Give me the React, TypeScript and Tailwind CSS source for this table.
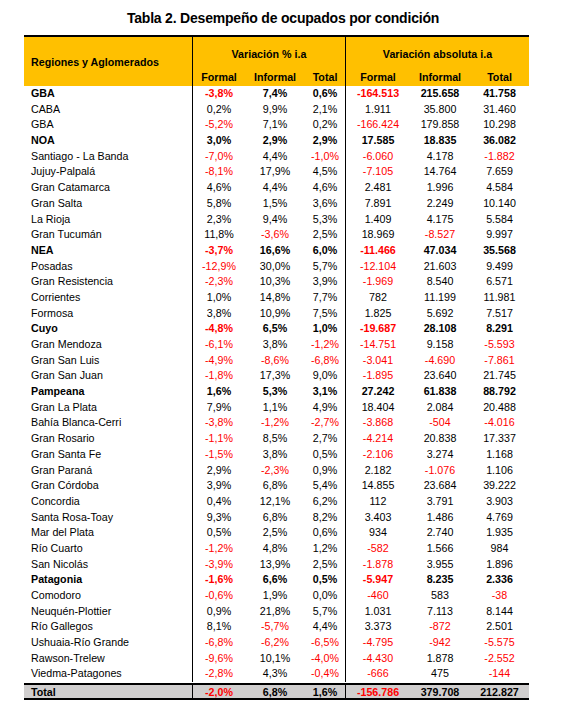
import React from 'react'

type Row = { name: string; bold?: boolean; v: string[] }

const rows: Row[] = [
  { name: 'GBA', bold: true, v: ['-3,8%', '7,4%', '0,6%', '-164.513', '215.658', '41.758'] },
  { name: 'CABA', v: ['0,2%', '9,9%', '2,1%', '1.911', '35.800', '31.460'] },
  { name: 'GBA', v: ['-5,2%', '7,1%', '0,2%', '-166.424', '179.858', '10.298'] },
  { name: 'NOA', bold: true, v: ['3,0%', '2,9%', '2,9%', '17.585', '18.835', '36.082'] },
  { name: 'Santiago - La Banda', v: ['-7,0%', '4,4%', '-1,0%', '-6.060', '4.178', '-1.882'] },
  { name: 'Jujuy-Palpalá', v: ['-8,1%', '17,9%', '4,5%', '-7.105', '14.764', '7.659'] },
  { name: 'Gran Catamarca', v: ['4,6%', '4,4%', '4,6%', '2.481', '1.996', '4.584'] },
  { name: 'Gran Salta', v: ['5,8%', '1,5%', '3,6%', '7.891', '2.249', '10.140'] },
  { name: 'La Rioja', v: ['2,3%', '9,4%', '5,3%', '1.409', '4.175', '5.584'] },
  { name: 'Gran Tucumán', v: ['11,8%', '-3,6%', '2,5%', '18.969', '-8.527', '9.997'] },
  { name: 'NEA', bold: true, v: ['-3,7%', '16,6%', '6,0%', '-11.466', '47.034', '35.568'] },
  { name: 'Posadas', v: ['-12,9%', '30,0%', '5,7%', '-12.104', '21.603', '9.499'] },
  { name: 'Gran Resistencia', v: ['-2,3%', '10,3%', '3,9%', '-1.969', '8.540', '6.571'] },
  { name: 'Corrientes', v: ['1,0%', '14,8%', '7,7%', '782', '11.199', '11.981'] },
  { name: 'Formosa', v: ['3,8%', '10,9%', '7,5%', '1.825', '5.692', '7.517'] },
  { name: 'Cuyo', bold: true, v: ['-4,8%', '6,5%', '1,0%', '-19.687', '28.108', '8.291'] },
  { name: 'Gran Mendoza', v: ['-6,1%', '3,8%', '-1,2%', '-14.751', '9.158', '-5.593'] },
  { name: 'Gran San Luis', v: ['-4,9%', '-8,6%', '-6,8%', '-3.041', '-4.690', '-7.861'] },
  { name: 'Gran San Juan', v: ['-1,8%', '17,3%', '9,0%', '-1.895', '23.640', '21.745'] },
  { name: 'Pampeana', bold: true, v: ['1,6%', '5,3%', '3,1%', '27.242', '61.838', '88.792'] },
  { name: 'Gran La Plata', v: ['7,9%', '1,1%', '4,9%', '18.404', '2.084', '20.488'] },
  { name: 'Bahía Blanca-Cerri', v: ['-3,8%', '-1,2%', '-2,7%', '-3.868', '-504', '-4.016'] },
  { name: 'Gran Rosario', v: ['-1,1%', '8,5%', '2,7%', '-4.214', '20.838', '17.337'] },
  { name: 'Gran Santa Fe', v: ['-1,5%', '3,8%', '0,5%', '-2.106', '3.274', '1.168'] },
  { name: 'Gran Paraná', v: ['2,9%', '-2,3%', '0,9%', '2.182', '-1.076', '1.106'] },
  { name: 'Gran Córdoba', v: ['3,9%', '6,8%', '5,4%', '14.855', '23.684', '39.222'] },
  { name: 'Concordia', v: ['0,4%', '12,1%', '6,2%', '112', '3.791', '3.903'] },
  { name: 'Santa Rosa-Toay', v: ['9,3%', '6,8%', '8,2%', '3.403', '1.486', '4.769'] },
  { name: 'Mar del Plata', v: ['0,5%', '2,5%', '0,6%', '934', '2.740', '1.935'] },
  { name: 'Río Cuarto', v: ['-1,2%', '4,8%', '1,2%', '-582', '1.566', '984'] },
  { name: 'San Nicolás', v: ['-3,9%', '13,9%', '2,5%', '-1.878', '3.955', '1.896'] },
  { name: 'Patagonia', bold: true, v: ['-1,6%', '6,6%', '0,5%', '-5.947', '8.235', '2.336'] },
  { name: 'Comodoro', v: ['-0,6%', '1,9%', '0,0%', '-460', '583', '-38'] },
  { name: 'Neuquén-Plottier', v: ['0,9%', '21,8%', '5,7%', '1.031', '7.113', '8.144'] },
  { name: 'Río Gallegos', v: ['8,1%', '-5,7%', '4,4%', '3.373', '-872', '2.501'] },
  { name: 'Ushuaia-Río Grande', v: ['-6,8%', '-6,2%', '-6,5%', '-4.795', '-942', '-5.575'] },
  { name: 'Rawson-Trelew', v: ['-9,6%', '10,1%', '-4,0%', '-4.430', '1.878', '-2.552'] },
  { name: 'Viedma-Patagones', v: ['-2,8%', '4,3%', '-0,4%', '-666', '475', '-144'] },
]

const total = ['-2,0%', '6,8%', '1,6%', '-156.786', '379.708', '212.827']

const cols = 'grid grid-cols-[168px_53px_60px_40px_65px_60px_59px]'

function Cells({ v }: { v: string[] }) {
  return (
    <>
      {v.map((x, i) => (
        <div
          key={i}
          className={`text-center ${x.startsWith('-') ? 'text-[#ff0000]' : 'text-black'} ${
            i === 0 || i === 3 ? 'border-l border-black' : ''
          }`}
        >
          {x}
        </div>
      ))}
    </>
  )
}

export default function App() {
  return (
    <div className="w-[564px] h-[707px] bg-white font-['Liberation_Sans',Arial,sans-serif] text-black">
      <div className="pt-[9px] h-[35px] text-center text-[14px] font-bold leading-[18px] tracking-[-0.2px] pl-[2px]">
        Tabla 2. Desempeño de ocupados por condición
      </div>

      <div className="ml-[24px] w-[505px] text-[10.7px]">
        {/* Header */}
        <div className={`${cols} grid-rows-[32px_17px] bg-[#ffc000] border-t-2 border-black font-bold`}>
          <div className="row-span-2 flex items-center pl-[7px] pt-[2px]">Regiones y Aglomerados</div>
          <div className="col-span-3 border-l border-black flex items-center justify-center pt-[2px]">
            Variación % i.a
          </div>
          <div className="col-span-3 border-l border-black flex items-center justify-center pt-[2px]">
            Variación absoluta i.a
          </div>
          <div className="border-l border-black text-center leading-[17px]">Formal</div>
          <div className="text-center leading-[17px]">Informal</div>
          <div className="text-center leading-[17px]">Total</div>
          <div className="border-l border-black text-center leading-[17px]">Formal</div>
          <div className="text-center leading-[17px]">Informal</div>
          <div className="text-center leading-[17px]">Total</div>
        </div>

        {/* Body */}
        {rows.map((r, i) => (
          <div key={i} className={`${cols} h-[15.7px] leading-[15.7px] ${r.bold ? 'font-bold' : ''}`}>
            <div className="pl-[7px] whitespace-nowrap">{r.name}</div>
            <Cells v={r.v} />
          </div>
        ))}

        {/* Total */}
        <div className={`${cols} h-[17px] leading-[14px] bg-[#d0cece] border-y-2 border-black font-bold mt-[0.4px]`}>
          <div className="pl-[7px]">Total</div>
          <Cells v={total} />
        </div>
      </div>
    </div>
  )
}
